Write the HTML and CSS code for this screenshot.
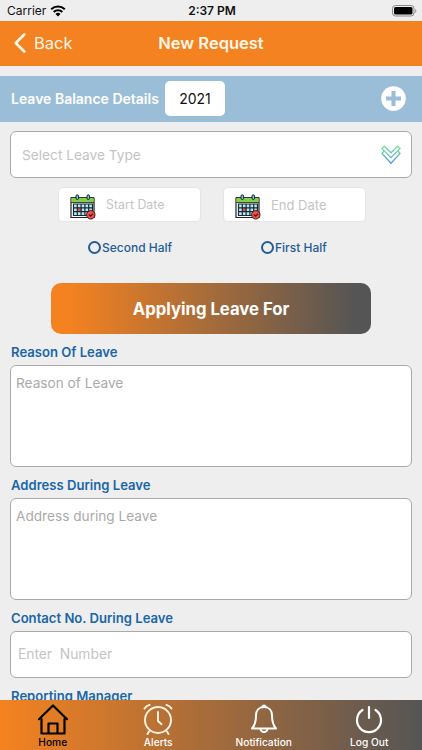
FILE: index.html
```html
<!DOCTYPE html>
<html lang="en">
<head>
    <meta charset="UTF-8">
    <meta name="viewport" content="width=device-width, initial-scale=1.0">
    <title>New Request</title>
    <link rel="stylesheet" href="styles.css">
</head>
<body>
    <svg class="defs" width="0" height="0">
        <symbol id="calendar" viewBox="0 0 26 26">
            <path d="M1 4h23v19.500h-23z" fill="#fff" stroke="#222" stroke-width="1.200"/>
            <path d="M1.500 4h22v4.500h-22z" fill="#84cf45"/>
            <path d="M1 8.500h23M1 3.500h23" stroke="#222" stroke-width=".8"/>
            <path d="M3.500 10h19v11.500h-19z" fill="#b9e9f2"/>
            <path d="M7.500 13.500h4v4h-4z" fill="#f0524f"/>
            <path d="M3.500 10h19v11.500h-19zM3.500 13.800h19M3.500 17.600h19M7.300 10v11.500M11.100 10v11.500M14.900 10v11.500M18.700 10v11.500" fill="none" stroke="#142a35" stroke-width="1.200"/>
            <rect x="6" y=".8" width="2.600" height="4.700" rx="1.300" fill="#6fc4d4" stroke="#142a35"/>
            <rect x="17" y=".8" width="2.600" height="4.700" rx="1.300" fill="#6fc4d4" stroke="#142a35"/>
            <circle cx="20.800" cy="20.800" r="4.200" fill="#f0524f" stroke="#4a1717"/>
            <path d="M18.900 20.500l1.700 1.600 2.400-2.300" fill="none" stroke="#4a1717" stroke-width="1.200"/>
        </symbol>
    </svg>

    <div class="status-bar">
        <div class="carrier">
            <span>Carrier</span>
            <svg width="16" height="12" viewBox="0 0 16 12" fill="none" stroke="#000" stroke-width="2.100">
                <path d="M1.200 4.300a9.800 9.800 0 0 1 13.600 0"/>
                <path d="M3.700 7a6.200 6.200 0 0 1 8.600 0"/>
                <path d="M8 11.500L5.500 9a3.600 3.600 0 0 1 5 0z" fill="#000" stroke="none"/>
            </svg>
        </div>
        <div class="time">2:37 PM</div>
        <svg class="battery" width="25" height="12" viewBox="0 0 25 12">
            <rect x=".5" y=".5" width="21.500" height="10.500" rx="3" fill="none" stroke="#888"/>
            <rect x="2" y="2" width="18.500" height="7.500" rx="1.500"/>
            <path d="M23.300 4v4c1.400-.6 1.400-3.400 0-4z" fill="#888"/>
        </svg>
    </div>

    <header class="header">
        <a class="back">
            <svg width="12" height="20" viewBox="0 0 12 20" fill="none" stroke="#fff7e8" stroke-width="2.600" stroke-linecap="round" stroke-linejoin="round">
                <path d="M10.300 1.500L1.700 10l8.600 8.500"/>
            </svg>
            <span>Back</span>
        </a>
        <h1>New Request</h1>
    </header>

    <div class="balance-bar">
        <span class="balance-title">Leave Balance Details</span>
        <span class="year">2021</span>
        <svg class="add" width="25" height="25" viewBox="0 0 25 25">
            <circle cx="12.500" cy="12.500" r="12.300" fill="#fff"/>
            <path d="M12.500 5v15M5 12.500h15" stroke="#9abdd8" stroke-width="4"/>
        </svg>
    </div>

    <main class="form">
        <div class="field select">
            <span class="select-text">Select Leave Type</span>
            <svg width="20" height="20" viewBox="0 0 20 20" fill="none" stroke="url(#chevrons)" stroke-width="1.300">
                <linearGradient id="chevrons" gradientUnits="userSpaceOnUse" x1="0" y1="0" x2="0" y2="20">
                    <stop offset="0" stop-color="#7bea88"/>
                    <stop offset="1" stop-color="#4c8df0"/>
                </linearGradient>
                <path d="M3.400 1.200L10 7.800l6.600-6.600L19 3.600l-9 9-9-9z"/>
                <path d="M2.800 6.200L1 8.500l9 9.800 9-9.800-1.800-2.300"/>
            </svg>
        </div>

        <div class="dates">
            <div class="date">
                <svg width="26" height="26"><use href="#calendar"/></svg>
                <span>Start Date</span>
            </div>
            <div class="date end">
                <svg width="26" height="26"><use href="#calendar"/></svg>
                <span>End Date</span>
            </div>
        </div>

        <div class="halves">
            <label class="half"><i class="radio"></i><span>Second Half</span></label>
            <label class="half"><i class="radio"></i><span>First Half</span></label>
        </div>

        <button class="apply" type="button">Applying Leave For</button>

        <div class="label">Reason Of Leave</div>
        <div class="field area">Reason of Leave</div>

        <div class="label">Address During Leave</div>
        <div class="field area">Address during Leave</div>

        <div class="label">Contact No. During Leave</div>
        <div class="field number">Enter&nbsp; Number</div>

        <div class="label">Reporting Manager</div>
    </main>

    <nav class="tabs">
        <a class="tab active">
            <svg width="32" height="32" viewBox="0 0 32 32" fill="none" stroke="#000" stroke-width="2.200" stroke-linejoin="round" stroke-linecap="round">
                <path d="M2 16.200L16 2.500l14 13.700"/>
                <path d="M4.500 16v14.500h23V16M11.500 30v-9.500h9V30"/>
            </svg>
            <span>Home</span>
        </a>
        <a class="tab">
            <svg width="32" height="32" viewBox="0 0 32 32" fill="none" stroke="#fff4e6" stroke-width="1.900" stroke-linecap="round">
                <circle cx="16" cy="17" r="13"/>
                <path d="M16 9v9l3.500 3.300M7 28.500l-1.500 2.500M25 28.500l1.500 2.500M2.500 5.500Q4 3 7.500 1.800M29.500 5.500Q28 3 24.500 1.800"/>
            </svg>
            <span>Alerts</span>
        </a>
        <a class="tab">
            <svg width="32" height="32" viewBox="0 0 32 32" fill="none" stroke="#fff" stroke-width="2" stroke-linejoin="round">
                <path d="M16 4c-5 0-8 3.600-8 8.300 0 6.500-.8 9.700-4 13.200h24c-3.200-3.500-4-6.700-4-13.200 0-4.700-3-8.300-8-8.300z"/>
                <path d="M14.500 4a1.500 1.500 0 0 1 3 0M12.500 25.500a3.500 3.500 0 0 0 7 0"/>
            </svg>
            <span>Notification</span>
        </a>
        <a class="tab">
            <svg width="32" height="32" viewBox="0 0 32 32" fill="none" stroke="#fff" stroke-width="2.200" stroke-linecap="round">
                <path d="M16 4v11M9.500 7a12 12 0 1 0 13 0"/>
            </svg>
            <span>Log Out</span>
        </a>
    </nav>
</body>
</html>
```
FILE: styles.css
```css
* {
    box-sizing: border-box;
}
body {
    display: flex;
    flex-direction: column;
    height: 750px;
    margin: 0;
    overflow: hidden;
    background-color: #eee;
    color: #111;
    font-family: Inter, "Liberation Sans", sans-serif;
    white-space: nowrap;
}
.defs {
    position: absolute;
}
.status-bar {
    display: grid;
    grid-template-columns: 1fr auto 1fr;
    align-items: center;
    flex: none;
    height: 21px;
    padding: 0 5px 0 7px;
    font-size: 12px;
}
.carrier {
    display: flex;
    align-items: center;
    gap: 4px;
}
.time {
    font-weight: 600;
}
.battery {
    justify-self: end;
}
.header {
    display: grid;
    grid-template-columns: 1fr auto 1fr;
    align-items: center;
    flex: none;
    height: 44.5px;
    padding: 0 14px 1px;
    background-color: #f58220;
    color: #fff7e8;
}
.back {
    display: flex;
    align-items: center;
    gap: 8px;
    font-size: 16.5px;
}
.header h1 {
    margin: 0;
    font-size: 16.5px;
    font-weight: 600;
}
.balance-bar {
    display: flex;
    align-items: center;
    flex: none;
    height: 46px;
    margin-top: 10px;
    padding: 0 16px 0 11px;
    background-color: #9abdd8;
}
.balance-title {
    width: 154px;
    color: #fff;
    font-size: 14px;
    font-weight: 600;
}
.year {
    width: 60px;
    height: 35px;
    border-radius: 5px;
    background-color: #fff;
    font-size: 14px;
    line-height: 35px;
    text-align: center;
}
.add {
    margin-left: auto;
}
.form {
    flex: 1;
    min-height: 0;
    padding: 9.5px 10px 0;
    overflow: hidden;
}
.field {
    border: 1px solid #aaa;
    border-radius: 6px;
    background-color: #fff;
}
.select {
    display: flex;
    align-items: center;
    justify-content: space-between;
    height: 47px;
    padding: 0 10px 0 11px;
    color: #c4c4c6;
    font-size: 13.7px;
}
.dates {
    display: grid;
    grid-template-columns: 143px 143px;
    gap: 22px;
    margin: 9px 0 0 48px;
}
.date {
    display: flex;
    align-items: center;
    gap: 10px;
    height: 35px;
    padding: 0 0 0 11px;
    border: 1px solid #e5e5e5;
    border-radius: 5px;
    background-color: #fff;
    color: #c4c4c6;
    font-size: 12.4px;
}
.date svg {
    margin-top: 4px;
}
.date.end {
    font-size: 13px;
}
.halves {
    display: grid;
    grid-template-columns: 173px 1fr;
    margin: 17px 0 0 78px;
    color: #245c96;
    font-size: 12px;
    font-weight: 500;
}
.half {
    display: flex;
    align-items: center;
    gap: 1px;
    height: 17px;
}
.radio {
    width: 13px;
    height: 13px;
    border: 2px solid #245c96;
    border-radius: 50%;
}
.apply {
    display: block;
    width: 320px;
    height: 51px;
    margin: 27px 0 0 41px;
    padding: 0;
    border: 0;
    border-radius: 10px;
    background: linear-gradient(to right, #f58220 5%, #555 95%);
    color: #fff;
    font-family: inherit;
    font-size: 16.7px;
    font-weight: 700;
}
.label {
    height: 31px;
    padding-left: 1px;
    color: #1966a8;
    font-size: 13.1px;
    font-weight: 600;
    line-height: 37px;
}
.area {
    height: 102px;
    padding: 8px 5px;
    color: #aaa;
    font-size: 13.65px;
    line-height: 18px;
}
.number {
    height: 46.5px;
    padding-left: 7px;
    color: #c4c4c6;
    font-size: 13.8px;
    line-height: 45px;
}
.tabs {
    display: grid;
    grid-template-columns: repeat(4, 1fr);
    flex: none;
    height: 50px;
    background: linear-gradient(to right, #f58220, #555);
}
.tab {
    display: flex;
    flex-direction: column;
    align-items: center;
    padding-top: 3px;
    color: #fff;
    font-size: 10.2px;
    font-weight: 500;
    line-height: 14px;
}
.tab.active {
    color: #000;
}
```
